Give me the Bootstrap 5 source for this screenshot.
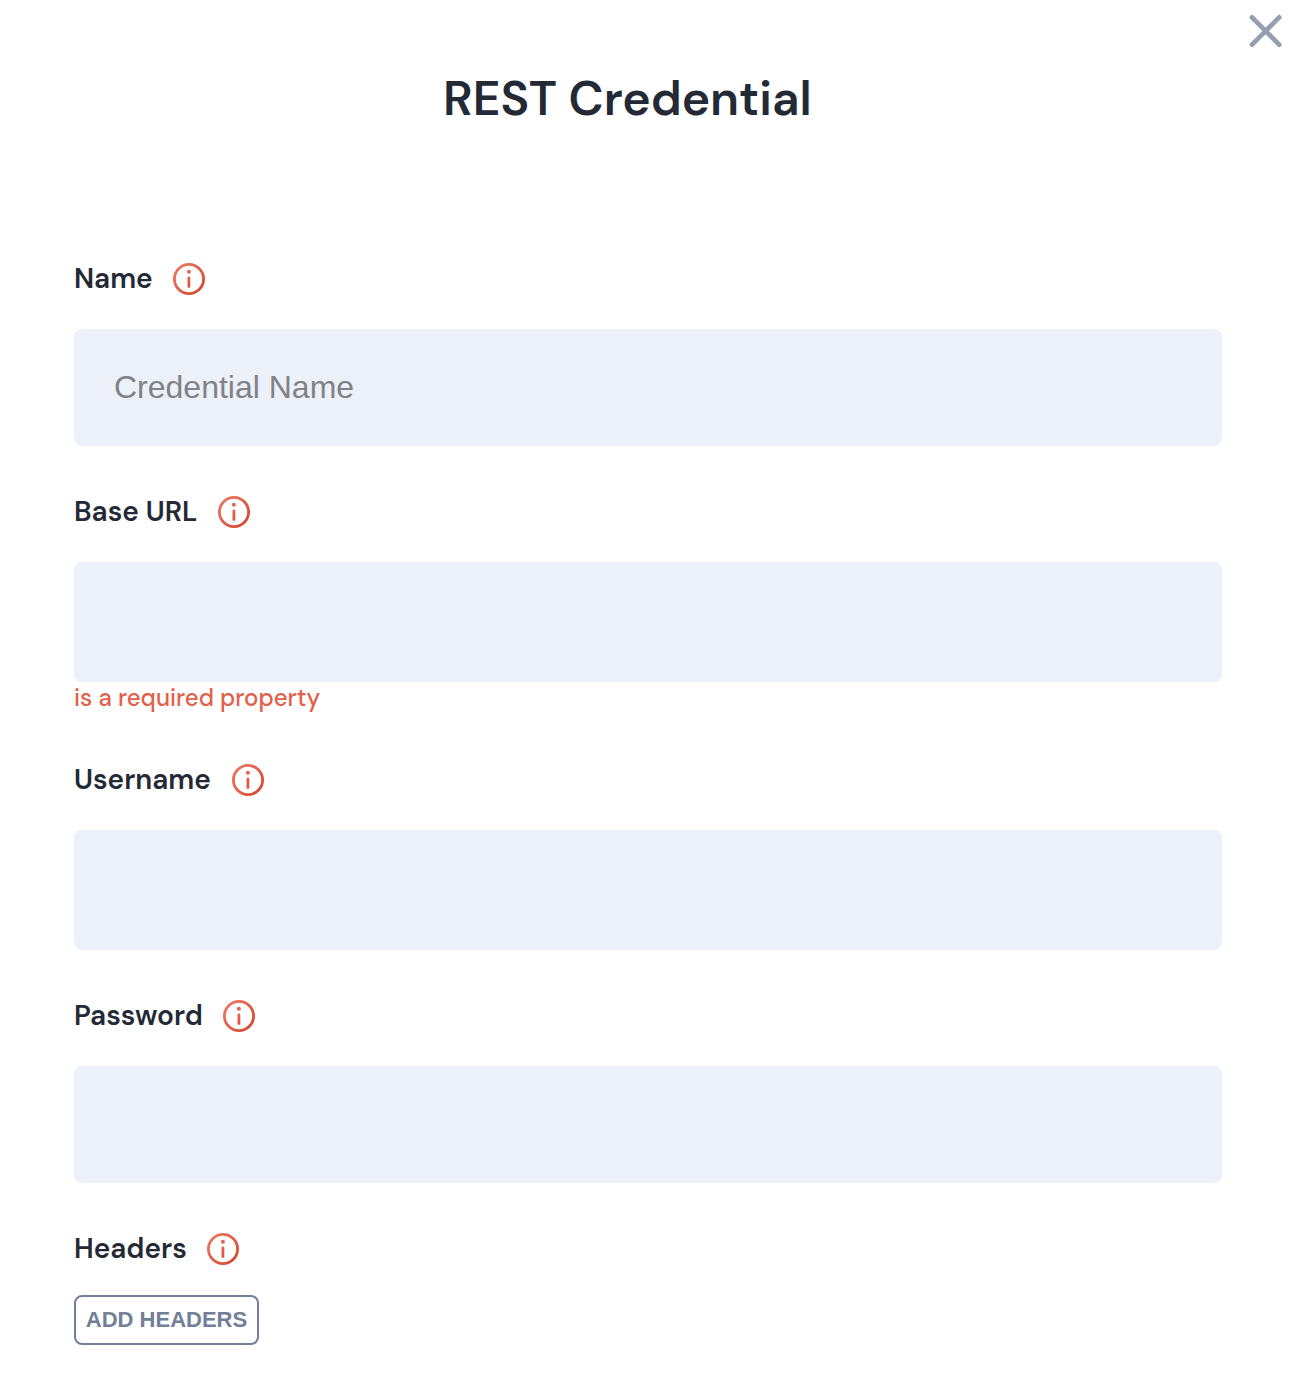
<!DOCTYPE html>
<html lang="en">
<head>
<meta charset="utf-8">
<meta name="viewport" content="width=device-width, initial-scale=1">
<title>REST Credential</title>
<link rel="stylesheet" href="https://cdn.jsdelivr.net/npm/bootstrap@5.3.0/dist/css/bootstrap.min.css">
<style>
body { background: #fff; color: #232a35; font-family: "DM Sans", Inter, "Open Sans", sans-serif; font-optical-sizing: none; overflow: hidden; }
.dialog-close { width: 34px; height: 34px; margin: 14px 15px 0 0; }
.dialog-title { font-size: 48px; line-height: 60px; font-weight: 630; margin: 21px 0 0 443px; height: 60px; white-space: nowrap; }
.dialog-form { width: 1148px; margin: 134px 0 0 74px; }
.field-label { height: 32px; margin-bottom: 34px; }
.field-label label { font-size: 28px; line-height: 32px; font-weight: 630; white-space: nowrap; }
.field-block { margin-bottom: 50px; }
.w-name { width: 99px; } .w-url { width: 144px; } .w-user { width: 158px; } .w-pass { width: 149px; } .w-head { width: 133px; }
.field-input, .field-input:focus { height: 120px; background: #ecf0f8; border: 0; border-radius: 8px; padding: 0 40px; font: 32px "Liberation Sans", Arial, sans-serif; color: #232a35; box-shadow: none; }
.field-input::placeholder { color: #808285; opacity: 1; }
.field-short { height: 117px; }
.field-error { color: #e2604a; font-size: 24px; line-height: 32px; height: 32px; font-weight: 520; }
.add-button { width: 185px; height: 50px; margin-top: 30px; border: 2px solid #718096; border-radius: 8px; color: #718096; font: bold 22px "Liberation Sans", Arial, sans-serif; white-space: nowrap; }
</style>
<script src="https://cdn.jsdelivr.net/npm/bootstrap@5.3.0/dist/js/bootstrap.bundle.min.js"></script>
</head>
<body>
<svg width="0" height="0" class="position-absolute" aria-hidden="true">
  <defs>
    <linearGradient id="coral" gradientUnits="userSpaceOnUse" x1="3" y1="4" x2="29" y2="28"><stop stop-color="#ec7660"/><stop offset="1" stop-color="#d84731"/></linearGradient>
    <symbol id="info" viewBox="0 0 32 32">
      <circle cx="16" cy="16" r="14.6" fill="none" stroke="url(#coral)" stroke-width="2.8"/>
      <circle cx="15.9" cy="8.7" r="2" fill="url(#coral)"/>
      <rect x="14.5" y="13.6" width="2.8" height="11.4" rx="1.4" fill="url(#coral)"/>
    </symbol>
  </defs>
</svg>
<main>
  <div class="d-flex justify-content-end">
    <button type="button" class="btn p-0 border-0 dialog-close d-flex" aria-label="Close">
      <svg width="34" height="34" viewBox="0 0 34 34" fill="none" stroke="#949fb0" stroke-width="4.8" stroke-linecap="round"><path d="M3 3.4 30.2 30.6M30.2 3.4 3 30.6"/></svg>
    </button>
  </div>
  <h1 class="dialog-title"><span>REST Credential</span></h1>
  <form class="dialog-form">
    <div class="field-block">
      <div class="field-label d-flex"><label class="w-name" for="f1">Name</label><svg width="32" height="32"><use href="#info"/></svg></div>
      <input id="f1" class="form-control field-input field-short" placeholder="Credential Name">
    </div>
    <div class="field-block">
      <div class="field-label d-flex"><label class="w-url" for="f2">Base URL</label><svg width="32" height="32"><use href="#info"/></svg></div>
      <input id="f2" class="form-control field-input">
      <div class="field-error">is a required property</div>
    </div>
    <div class="field-block">
      <div class="field-label d-flex"><label class="w-user" for="f3">Username</label><svg width="32" height="32"><use href="#info"/></svg></div>
      <input id="f3" class="form-control field-input">
    </div>
    <div class="field-block">
      <div class="field-label d-flex"><label class="w-pass" for="f4">Password</label><svg width="32" height="32"><use href="#info"/></svg></div>
      <input id="f4" type="password" class="form-control field-input field-short">
    </div>
    <div class="field-label d-flex mb-0"><label class="w-head">Headers</label><svg width="32" height="32"><use href="#info"/></svg></div>
    <button type="button" class="btn add-button p-0 d-flex align-items-center justify-content-center">ADD HEADERS</button>
  </form>
</main>
</body>
</html>
